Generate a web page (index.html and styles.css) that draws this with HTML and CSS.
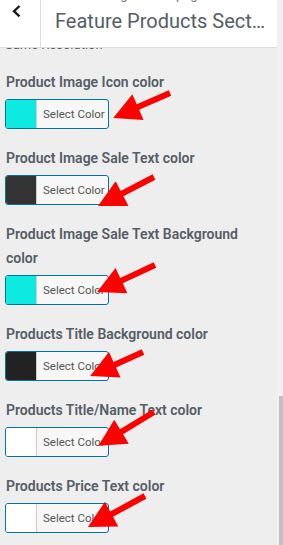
FILE: index.html
```html
<!DOCTYPE html>
<html lang="en">
<head>
  <meta charset="UTF-8">
  <meta name="viewport" content="width=device-width, initial-scale=1.0">
  <title>Feature Products Section</title>
  <link rel="stylesheet" href="styles.css">
</head>
<body>
  <div class="page">
    <div class="panel">
      <!-- шапка секции -->
      <div class="head">
        <button class="back" aria-label="Back">
          <svg width="40" height="24" viewBox="0 0 40 24"><polyline points="19.5,6 14,11.2 19.5,16.4" fill="none" stroke="#191e23" stroke-width="2.4"/></svg>
        </button>
        <div class="head-title">
          <span class="crumb">Customizing ▸ Homepage Sections</span>
          <h3 class="title">Feature Products Section</h3>
        </div>
      </div>

      <div class="controls">
        <p class="desc">Same Resolution</p>

        <div class="control">
          <label class="control-label">Product Image Icon color</label>
          <button class="color-btn"><span class="swatch swatch-cyan"></span><span class="btn-text">Select Color</span></button>
        </div>
        <div class="control">
          <label class="control-label">Product Image Sale Text color</label>
          <button class="color-btn"><span class="swatch swatch-dark"></span><span class="btn-text">Select Color</span></button>
        </div>
        <div class="control">
          <label class="control-label">Product Image Sale Text Background color</label>
          <button class="color-btn"><span class="swatch swatch-cyan"></span><span class="btn-text">Select Color</span></button>
        </div>
        <div class="control">
          <label class="control-label">Products Title Background color</label>
          <button class="color-btn"><span class="swatch swatch-black"></span><span class="btn-text">Select Color</span></button>
        </div>
        <div class="control">
          <label class="control-label">Products Title/Name Text color</label>
          <button class="color-btn"><span class="swatch swatch-white"></span><span class="btn-text">Select Color</span></button>
        </div>
        <div class="control">
          <label class="control-label">Products Price Text color</label>
          <button class="color-btn"><span class="swatch swatch-white"></span><span class="btn-text">Select Color</span></button>
        </div>
      </div>
    </div>

    <div class="scrollbar"><div class="thumb"></div></div>

    <!-- красные стрелки-пометки поверх скриншота -->
    <svg class="arrows" width="283" height="545" viewBox="0 0 283 545">
      <g fill="#ff0000">
        <path transform="translate(170 93) rotate(156.3)" d="M0-3H35V-14L62 0 35 14V3H0Z"/>
        <path transform="translate(154 177) rotate(152.6)" d="M0-3H36V-14L63 0 36 14V3H0Z"/>
        <path transform="translate(155 265) rotate(155)" d="M0-3H37V-14L64 0 37 14V3H0Z"/>
        <path transform="translate(143 352) rotate(155.6)" d="M0-3H31V-14L58 0 31 14V3H0Z"/>
        <path transform="translate(154 412) rotate(148.7)" d="M0-3H38V-14L65 0 38 14V3H0Z"/>
        <path transform="translate(145 496) rotate(151.5)" d="M0-3H38V-14L65 0 38 14V3H0Z"/>
      </g>
    </svg>
  </div>
</body>
</html>
```

FILE: styles.css
```css
body {
  margin: 0;
  background: #eeeeee;
  font-family: Roboto, "Liberation Sans", sans-serif;
  color: #555d66;
}
.page {
  position: relative;
  display: flex;
  width: 283px;
  height: 545px;
  overflow: hidden;
}
.panel {
  width: 277px;
  flex-shrink: 0;
}
.head {
  position: relative;
  z-index: 1;
  display: flex;
  height: 47px;
  background: #fff;
  border-bottom: 1px solid #dddddd;
}
.back {
  width: 41px;
  height: 47px;
  padding: 0;
  border: none;
  border-right: 1px solid #dddddd;
  background: #fff;
  display: flex;
  align-items: flex-start;
}
.head-title {
  display: flex;
  flex-direction: column;
  padding-left: 14px;
  min-width: 0;
  width: 211px;
}
.crumb {
  font-size: 13px;
  line-height: 16px;
  margin-top: -13px;
  white-space: nowrap;
  color: #72777c;
}
.title {
  margin: 5px 0 0;
  font-size: 20px;
  line-height: 26px;
  font-weight: 400;
  white-space: nowrap;
  overflow: hidden;
  text-overflow: ellipsis;
}
.controls {
  padding: 0 12px 0 5px;
}
.desc {
  margin: -12px 0 17px;
  font-size: 13px;
  line-height: 17px;
}
.control {
  margin-bottom: 17px;
}
.control-label {
  display: block;
  padding-left: 1px;
  font-size: 14px;
  line-height: 24px;
  font-weight: 600;
  margin-bottom: 5px;
}
.color-btn {
  display: flex;
  align-items: stretch;
  width: 104px;
  height: 30px;
  padding: 0;
  border: 1px solid #0073aa;
  border-radius: 3px;
  background: #f7f7f7;
  overflow: hidden;
}
.swatch {
  width: 30px;
  border-right: 1px solid #cccccc;
}
.swatch-cyan { background: #0eeadf; }
.swatch-dark { background: #333333; }
.swatch-black { background: #222222; }
.swatch-white { background: #ffffff; }
.btn-text {
  padding-left: 6px;
  font-family: Roboto, "Liberation Sans", sans-serif;
  font-size: 11.5px;
  line-height: 28px;
  color: #555555;
  white-space: nowrap;
}
.scrollbar {
  flex: 1;
  background: #f1f1f1;
  padding: 396px 0 0 2px;
}
.thumb {
  height: 149px;
  background: #c1c1c1;
}
.arrows {
  position: absolute;
  top: 0;
  left: 0;
  pointer-events: none;
}
```
